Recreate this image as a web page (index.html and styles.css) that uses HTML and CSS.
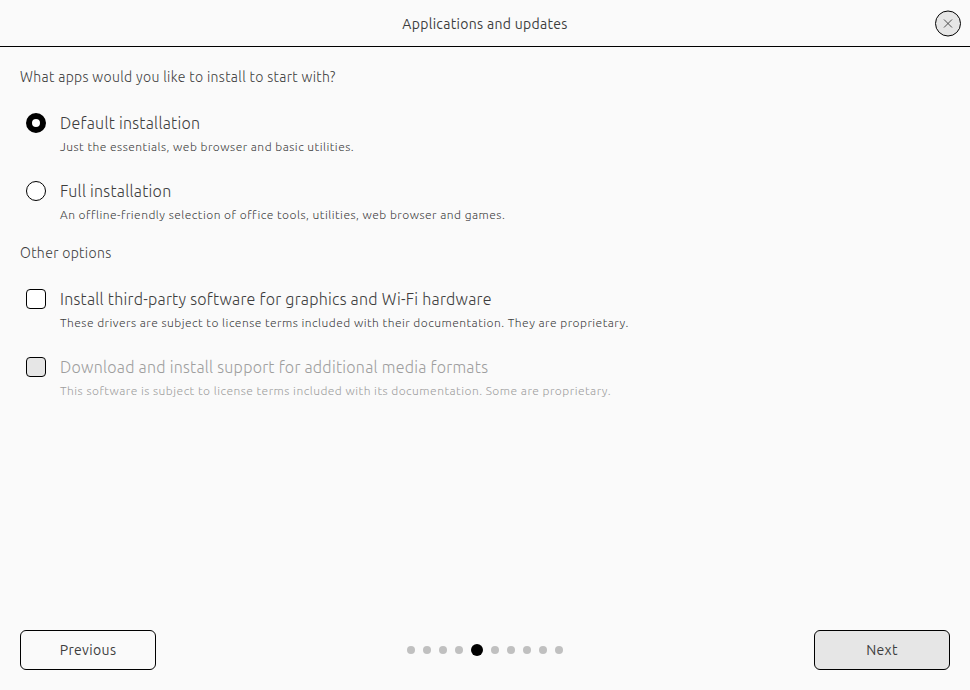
FILE: index.html
```html
<!DOCTYPE html>
<html lang="en">
<head>
<meta charset="utf-8">
<title>Applications and updates</title>
<link rel="stylesheet" href="styles.css">
</head>
<body>
<header class="titlebar">
  <h1 class="title">Applications and updates</h1>
  <button class="close" aria-label="Close"><svg width="26" height="27" viewBox="0 0 26 27"><circle cx="13" cy="13.5" r="12.5"/><path d="M9 9.5l8 8M17 9.5l-8 8"/></svg></button>
</header>
<main class="content">
  <p class="heading">What apps would you like to install to start with?</p>
  <div class="option">
    <span class="radio checked"></span>
    <div class="text"><div class="label">Default installation</div><div class="sub">Just the essentials, web browser and basic utilities.</div></div>
  </div>
  <div class="option">
    <span class="radio"></span>
    <div class="text"><div class="label">Full installation</div><div class="sub">An offline-friendly selection of office tools, utilities, web browser and games.</div></div>
  </div>
  <p class="heading other">Other options</p>
  <div class="option">
    <span class="check"></span>
    <div class="text"><div class="label">Install third-party software for graphics and Wi-Fi hardware</div><div class="sub">These drivers are subject to license terms included with their documentation. They are proprietary.</div></div>
  </div>
  <div class="option disabled">
    <span class="check"></span>
    <div class="text"><div class="label">Download and install support for additional media formats</div><div class="sub">This software is subject to license terms included with its documentation. Some are proprietary.</div></div>
  </div>
</main>
<footer class="footer">
  <button class="btn">Previous</button>
  <div class="dots"><i></i><i></i><i></i><i></i><i class="on"></i><i></i><i></i><i></i><i></i><i></i></div>
  <button class="btn next">Next</button>
</footer>
</body>
</html>
```
FILE: styles.css
```css
* { box-sizing: border-box; margin: 0; padding: 0; }
body { width: 970px; height: 690px; display: flex; flex-direction: column; background: #fafafa; color: #3d3d3d; font-family: Ubuntu, "Noto Sans", "Open Sans", sans-serif; overflow: hidden; font-weight: 300; white-space: nowrap; }
.titlebar { height: 47px; border-bottom: 1px solid #000; display: grid; grid-template-columns: 26px 1fr 26px; padding: 10px 9px 9px; align-items: center; }
.title { grid-column: 2; text-align: center; font-size: 14px; font-weight: 400; line-height: 20px; letter-spacing: 0.31px; padding-top: 1px; }
.close { width: 26px; height: 27px; border: 0; background: none; }
.close svg { display: block; stroke-width: 1; }
.close circle { fill: #e6e6e6; stroke: #000; }
.close path { fill: none; stroke: #3d3d3d; stroke-width: 0.9; }
.content { flex: 1; padding: 20px 20px 0; }
.heading { font-size: 14px; line-height: 20px; letter-spacing: 0.34px; }
.option { display: flex; padding-left: 6px; gap: 14px; height: 44px; margin-top: 24px; }
.heading.other { margin-top: 20px; }
.radio, .check { width: 20px; height: 20px; border: 1px solid #000; background: #fff; margin-top: 2px; flex: none; }
.radio { border-radius: 50%; }
.radio.checked { border-width: 6px; }
.check { border-radius: 4px; }
.label { font-size: 16px; line-height: 24px; letter-spacing: 0.25px; }
.sub { font-size: 12px; line-height: 20px; margin-top: 2px; letter-spacing: 0.473px; }
.disabled { color: #9e9e9e; }
.disabled .check { background: #e6e6e6; }
.footer { height: 60px; padding: 0 20px 20px; display: flex; justify-content: space-between; align-items: center; }
.btn { width: 136px; height: 40px; border: 1px solid #000; border-radius: 6px; background: #fafafa; color: #3d3d3d; font: 400 14px/20px Ubuntu, "Noto Sans", sans-serif; letter-spacing: 0.35px; }
.btn.next { background: #e6e6e6; }
.dots { display: flex; gap: 8px; align-items: center; }
.dots i { width: 8px; height: 8px; border-radius: 50%; background: #c0c0c0; }
.dots .on { width: 12px; height: 12px; background: #000; }
```
